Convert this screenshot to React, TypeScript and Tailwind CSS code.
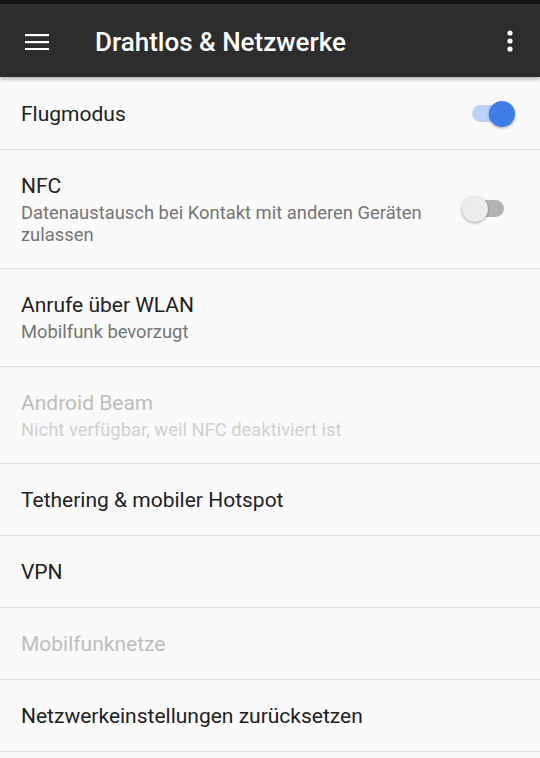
import React from "react";

type Item = {
  title: string;
  sub?: string;
  disabled?: boolean;
  toggle?: "on" | "off";
  pb?: string;
};

const items: Item[] = [
  { title: "Flugmodus", toggle: "on" },
  { title: "NFC", sub: "Datenaustausch bei Kontakt mit anderen Geräten zulassen", toggle: "off", pb: "pb-[22px]" },
  { title: "Anrufe über WLAN", sub: "Mobilfunk bevorzugt", pb: "pb-[23px]" },
  { title: "Android Beam", sub: "Nicht verfügbar, weil NFC deaktiviert ist", disabled: true, pb: "pb-[22px]" },
  { title: "Tethering & mobiler Hotspot" },
  { title: "VPN" },
  { title: "Mobilfunknetze", disabled: true },
  { title: "Netzwerkeinstellungen zurücksetzen" },
];

function Toggle({ on }: { on: boolean }) {
  return (
    <div className="relative w-[53px] h-[26px] shrink-0 mr-[25px]">
      <div
        className={
          "absolute left-[10px] top-[4px] w-[32px] h-[17px] rounded-full " +
          (on ? "bg-[#bcd2f7]" : "bg-[#b3b3b3]")
        }
      />
      <div
        className={
          "absolute top-0 w-[26px] h-[26px] rounded-full shadow-[0_1px_3px_rgba(0,0,0,0.35)] " +
          (on ? "right-0 bg-[#3d7de6]" : "left-0 bg-[#ececec]")
        }
      />
    </div>
  );
}

export default function App() {
  return (
    <div
      className="w-[540px] h-[758px] overflow-hidden bg-[#fafafa]"
      style={{ fontFamily: "Roboto, 'Noto Sans', sans-serif" }}
    >
      <div className="h-[4px] bg-[#141414]" />
      <div className="relative z-10 h-[73px] bg-[#2d2d2d] flex items-center shadow-[0_2px_4px_rgba(0,0,0,0.3)]">
        <div className="w-[95px] flex justify-start pl-[25px]">
          <svg width="24" height="18" viewBox="0 0 24 18">
            <rect x="0" y="2" width="24" height="2.2" fill="#fff" />
            <rect x="0" y="9" width="24" height="2.2" fill="#fff" />
            <rect x="0" y="16" width="24" height="2.2" fill="#fff" />
          </svg>
        </div>
        <div className="flex-1 text-white text-[26px] font-medium leading-none pt-[2px]">
          Drahtlos &amp; Netzwerke
        </div>
        <div className="w-[58px] flex justify-center pr-[2px]">
          <svg width="6" height="22" viewBox="0 0 6 22">
            <circle cx="3" cy="3" r="2.6" fill="#fff" />
            <circle cx="3" cy="11" r="2.6" fill="#fff" />
            <circle cx="3" cy="19" r="2.6" fill="#fff" />
          </svg>
        </div>
      </div>
      <div className="flex flex-col">
        {items.map((it, i) => (
          <div
            key={i}
            className={
              "flex items-center border-b border-[#dcdcdc] pl-[21px] " +
              (it.sub ? "pt-[22px] " + (it.pb ?? "") : i === 0 ? "h-[73px] pt-[2px]" : "h-[72px]")
            }
          >
            <div className="flex-1 min-w-0 pr-[30px]">
              <div
                className={
                  "text-[21px] leading-[28px] " +
                  (it.disabled ? "text-[#bdbdbd]" : "text-[#212121]")
                }
              >
                {it.title}
              </div>
              {it.sub && (
                <div
                  className={
                    "text-[18.4px] leading-[22px] mt-[2px] " +
                    (it.disabled ? "text-[#d0d0d0]" : "text-[#757575]")
                  }
                >
                  {it.sub}
                </div>
              )}
            </div>
            {it.toggle && <Toggle on={it.toggle === "on"} />}
          </div>
        ))}
      </div>
    </div>
  );
}
